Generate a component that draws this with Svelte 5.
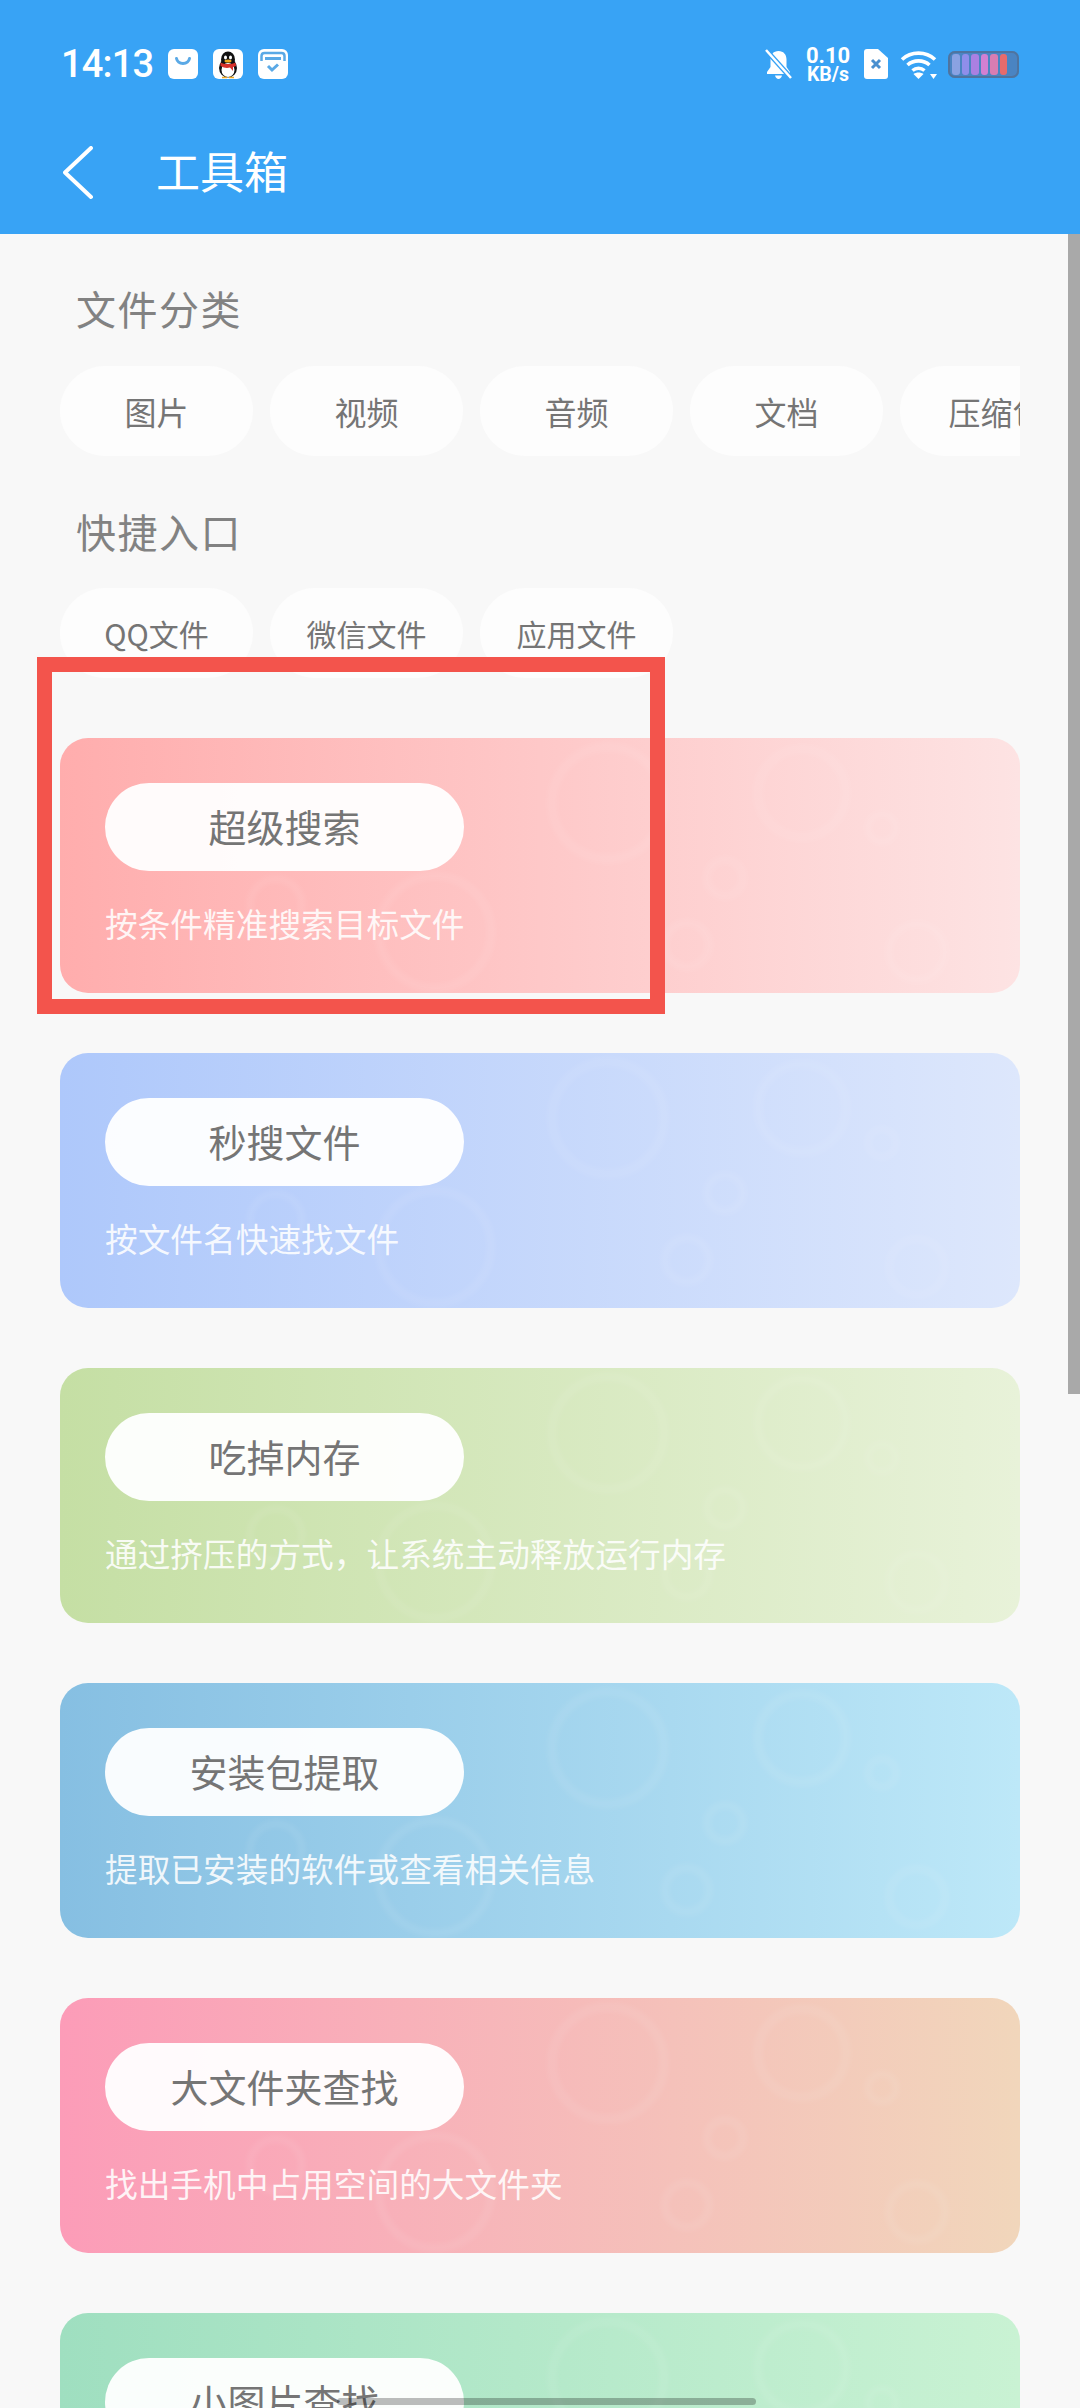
<script>
  const fileTypes = ['图片', '视频', '音频', '文档', '压缩包'];
  const shortcuts = ['QQ文件', '微信文件', '应用文件'];

  const tools = [
    { name: '超级搜索', desc: '按条件精准搜索目标文件', from: '#ffadad', to: '#fde3e3' },
    { name: '秒搜文件', desc: '按文件名快速找文件', from: '#aec8fb', to: '#dde7fc' },
    { name: '吃掉内存', desc: '通过挤压的方式，让系统主动释放运行内存', from: '#c5dfa4', to: '#e8f2d9' },
    { name: '安装包提取', desc: '提取已安装的软件或查看相关信息', from: '#86bfe2', to: '#bde8f8' },
    { name: '大文件夹查找', desc: '找出手机中占用空间的大文件夹', from: '#fc9cb8', to: '#f1d6bb' },
    { name: '小图片查找', desc: '', from: '#9fdfc0', to: '#c9f2d3' }
  ];

  // faint bubbles behind every card: cx, cy, r, stroke
  const rings = [
    [548, 65, 56, 10], [742, 55, 44, 10], [822, 90, 14, 8], [665, 140, 18, 9],
    [375, 194, 56, 9], [216, 167, 26, 8], [627, 207, 22, 9], [857, 214, 28, 9]
  ];

  const cells = ['#8aa2e2', '#8f8eea', '#aa80e2', '#d280d2', '#d97db2', '#e76b6c'];
</script>

<div class="screen">
  <header class="top">
    <div class="status">
      <div class="status-left">
        <span class="time">14:13</span>
        <svg class="note" viewBox="0 0 30 30">
          <rect width="30" height="30" rx="6" fill="#fff" />
          <path d="M8.5 9.5c1.5 6.5 11.5 6.5 13 0" fill="none" stroke="#5aa9e6" stroke-width="3" stroke-linecap="round" />
        </svg>
        <svg class="note" viewBox="0 0 30 30">
          <rect width="30" height="30" rx="6" fill="#fff" />
          <ellipse cx="15" cy="19" rx="9" ry="9.5" fill="#111" />
          <ellipse cx="15" cy="10.5" rx="7" ry="8" fill="#111" />
          <ellipse cx="15" cy="21" rx="6.5" ry="7" fill="#fff" />
          <path d="M7.5 13.5c4 2 11 2 15 0l.5 3.5-3 1v4l-3-3.5c-3 .8-6 .5-9.500-1.500z" fill="#d8302a" />
          <ellipse cx="12.500" cy="8.500" rx="1.500" ry="2" fill="#fff" />
          <ellipse cx="17.500" cy="8.500" rx="1.500" ry="2" fill="#fff" />
          <ellipse cx="15" cy="12" rx="3.500" ry="1.500" fill="#eda81f" />
          <path d="M9 28.500h5M16 28.500h5" stroke="#eda81f" stroke-width="1.500" />
        </svg>
        <svg class="note" viewBox="0 0 30 30">
          <rect width="30" height="30" rx="6" fill="#fff" />
          <path d="M3.500 12V7q0-3 3-3h17q3 0 3 3v5" fill="none" stroke="#5aa9e6" stroke-width="2.500" />
          <rect x="7" y="8" width="16" height="3" fill="#5aa9e6" />
          <path d="M10 17l4 4 6-5.500" fill="none" stroke="#5aa9e6" stroke-width="3" />
        </svg>
      </div>
      <div class="status-right">
        <svg class="bell" viewBox="0 0 27 30">
          <path d="M13.500 2c-5 0-8 3.500-8 8.500V18L2 23v2h23v-2l-3.500-5v-7.500C21.500 5.500 18.500 2 13.500 2zM10 26.500c.5 2 2 3.500 3.500 3.500s3-1.500 3.500-3.500z" fill="#fff" />
          <path d="M1 1l25 28" stroke="#38a3f5" stroke-width="5" />
          <path d="M1 1l25 28" stroke="#fff" stroke-width="2.500" />
        </svg>
        <div class="speed"><span>0.10</span><span class="unit">KB/s</span></div>
        <svg class="sim" viewBox="0 0 24 30">
          <path d="M3 0h11l10 9v18q0 3-3 3H3q-3 0-3-3V3q0-3 3-3z" fill="#fff" />
          <path d="M8 11l8 8M16 11l-8 8" stroke="#4a90cf" stroke-width="3" />
        </svg>
        <svg class="wifi" viewBox="0 0 37 29">
          <g fill="none" stroke="#fff" stroke-width="3.600">
            <path d="M2 9.500c9-8.500 24-8.500 33 0" />
            <path d="M7.500 15c6-5.500 16-5.500 22 0" />
            <path d="M12.500 20.500c3.500-3 8.500-3 12 0" />
          </g>
          <path d="M18.500 29l-5-5c3-2 7-2 10 0z" fill="#fff" />
          <path d="M30 24h7l-3.500 5z" fill="#fff" />
        </svg>
        <div class="battery">
          {#each cells as c}
            <i style="background: {c}"></i>
          {/each}
        </div>
      </div>
    </div>
    <div class="nav">
      <svg class="back" viewBox="0 0 30 54">
        <path d="M28 2L2 26.500 28 51" fill="none" stroke="#fff" stroke-width="4" stroke-linecap="round" stroke-linejoin="round" />
      </svg>
      <h1>工具箱</h1>
    </div>
  </header>

  <main>
    <h2>文件分类</h2>
    <div class="chips">
      {#each fileTypes as label}
        <div class="chip">{label}</div>
      {/each}
    </div>

    <h2 class="second">快捷入口</h2>
    <div class="chips small">
      {#each shortcuts as label}
        <div class="chip">{label}</div>
      {/each}
    </div>

    <div class="cards">
      {#each tools as tool}
        <section class="card" style="background: linear-gradient(90deg, {tool.from}, {tool.to})">
          <svg class="bubbles" viewBox="0 0 960 255">
            {#each rings as [cx, cy, r, w]}
              <circle {cx} {cy} {r} stroke-width={w} />
            {/each}
          </svg>
          <div class="pill">{tool.name}</div>
          <p>{tool.desc}</p>
        </section>
      {/each}
    </div>
  </main>

  <div class="highlight"></div>
  <div class="scrollbar"></div>
  <div class="home"></div>
</div>

<style>
  :global(body) {
    margin: 0;
    background: #f8f8f8;
  }

  .screen {
    position: relative;
    width: 1080px;
    height: 2408px;
    overflow: hidden;
    background: #f8f8f8;
    font-family: "Noto Sans CJK SC", "Noto Sans", sans-serif;
  }

  /* --- HEADER --- */
  .top {
    height: 234px;
    background: #38a3f5;
    color: #fff;
  }

  .status {
    height: 128px;
    display: flex;
    justify-content: space-between;
    align-items: center;
    padding: 0 61px 0 61px;
    box-sizing: border-box;
  }

  .status-left { display: flex; align-items: center; gap: 15px; }
  .status-right { display: flex; align-items: center; }

  .time {
    font-family: Roboto, sans-serif;
    font-weight: 500;
    font-size: 38px;
    letter-spacing: -0.8px;
    width: 92px;
  }

  .note { width: 30px; height: 30px; }

  .bell { width: 27px; height: 30px; margin-right: 13px; }

  .speed {
    width: 46px;
    display: flex;
    flex-direction: column;
    align-items: center;
    font-family: Roboto, sans-serif;
    font-weight: 700;
    font-size: 22px;
    line-height: 21px;
    margin-right: 13px;
  }
  .speed .unit { font-size: 19.500px; line-height: 18px; }

  .sim { width: 24px; height: 30px; margin-right: 12px; }
  .wifi { width: 37px; height: 29px; margin-right: 11px; }

  .battery {
    width: 71px;
    height: 27px;
    box-sizing: border-box;
    padding: 3px 4px;
    display: flex;
    gap: 2px;
    border-radius: 7px;
    background: #4a84c2;
    box-shadow: inset 0 0 0 2px #4f749f;
  }
  .battery i { width: 7.500px; border-radius: 3px; }

  .nav {
    height: 84px;
    display: flex;
    align-items: center;
    padding-left: 63px;
    padding-bottom: 6px;
  }

  .back { width: 30px; height: 54px; position: relative; top: 3px; }

  h1 {
    margin: 0 0 0 63px;
    font-size: 44px;
    font-weight: 400;
    line-height: 60px;
  }

  /* --- CONTENT --- */
  main { padding: 46px 60px 0; }

  h2 {
    margin: 0 0 30px 16px;
    font-size: 40px;
    font-weight: 400;
    letter-spacing: 1.500px;
    line-height: 56px;
    color: #828282;
  }
  h2.second { margin-top: 47px; margin-bottom: 29px; }

  .chips {
    display: flex;
    gap: 17px;
    width: 960px;
    overflow: hidden;
  }

  .chip {
    flex: none;
    width: 193px;
    height: 90px;
    display: flex;
    align-items: center;
    justify-content: center;
    border-radius: 45px;
    background: #fdfdfd;
    font-size: 32px;
    color: #757575;
  }
  .chips.small .chip { font-size: 30px; }

  .cards {
    margin-top: 60px;
    display: flex;
    flex-direction: column;
    gap: 60px;
  }

  .card {
    position: relative;
    flex: none;
    height: 255px;
    box-sizing: border-box;
    padding: 45px 45px 0;
    border-radius: 28px;
    overflow: hidden;
  }

  .bubbles {
    position: absolute;
    inset: 0;
    width: 100%;
    height: 100%;
    fill: none;
    stroke: #fff;
    stroke-opacity: 0.07;
    filter: blur(2.500px);
  }

  .pill {
    position: relative;
    width: 359px;
    height: 88px;
    display: flex;
    align-items: center;
    justify-content: center;
    border-radius: 44px;
    background: rgba(255, 255, 255, 0.95);
    font-size: 38px;
    line-height: 48px;
    padding-bottom: 2px;
    box-sizing: border-box;
    color: #757575;
  }

  .card p {
    position: relative;
    margin: 29px 0 0 0;
    font-size: 32.700px;
    line-height: 46px;
    color: rgba(255, 255, 255, 0.88);
  }

  /* --- OVERLAYS --- */
  .highlight {
    position: absolute;
    left: 37px;
    top: 657px;
    width: 628px;
    height: 357px;
    box-sizing: border-box;
    border: 15px solid #f3544c;
  }

  .scrollbar {
    position: absolute;
    right: 0;
    top: 234px;
    width: 12px;
    height: 1160px;
    background: #a9a9a9;
  }

  .home {
    position: absolute;
    left: 337px;
    top: 2398px;
    width: 419px;
    height: 7px;
    border-radius: 4px;
    background: rgba(0, 0, 0, 0.26);
  }
</style>
